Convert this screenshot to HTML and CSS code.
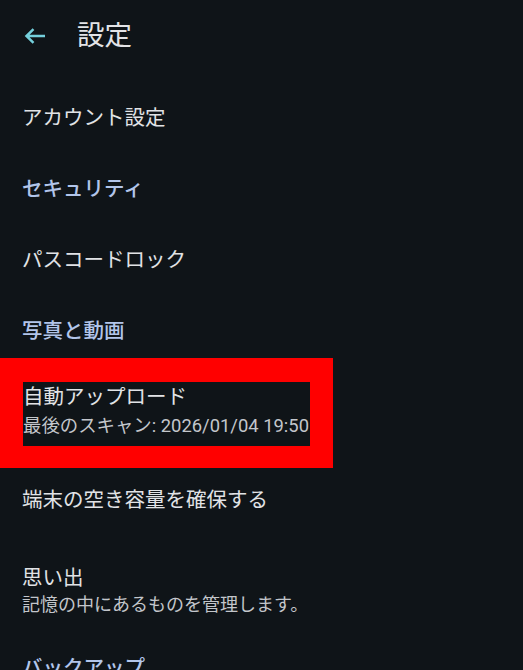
FILE: index.html
```html
<!DOCTYPE html>
<html lang="ja">
<head>
    <meta charset="UTF-8">
    <meta name="viewport" content="width=device-width, initial-scale=1.0">
    <title>設定</title>
    <link rel="stylesheet" href="styles.css">
</head>
<body>
    <div class="toolbar">
        <svg class="back" width="22" height="16" viewBox="0 0 22 16">
            <path d="M21 8H2.5M9.5 1.2L2.5 8l7 6.8" fill="none" stroke="#74cfdb" stroke-width="2.5"/>
        </svg>
        <h1>設定</h1>
    </div>

    <div class="row item"><p class="title">アカウント設定</p></div>
    <div class="row category"><p class="cat">セキュリティ</p></div>
    <div class="row item"><p class="title">パスコードロック</p></div>
    <div class="row category"><p class="cat">写真と動画</p></div>

    <div class="upload">
        <div class="marked">
            <p class="title">自動アップロード</p>
            <p class="summary">最後のスキャン: 2026/01/04 19:50</p>
        </div>
    </div>

    <div class="row item short"><p class="title">端末の空き容量を確保する</p></div>
    <div class="row item tall">
        <p class="title">思い出</p>
        <p class="summary">記憶の中にあるものを管理します。</p>
    </div>
    <div class="row category last"><p class="cat">バックアップ</p></div>
</body>
</html>
```

FILE: styles.css
```css
* { margin: 0; padding: 0; box-sizing: border-box; }
html, body { background: #0f1418; }
body { font-family: Roboto, "Noto Sans CJK JP", sans-serif; color: #e1e3e6; width: 523px; height: 670px; overflow: hidden; }
.toolbar { height: 72px; display: flex; align-items: center; padding-left: 24px; }
.back { display: block; margin-right: 31px; }
h1 { font-size: 27.5px; font-weight: 400; line-height: 40px; color: #e3e4e7; }
.row { display: flex; flex-direction: column; justify-content: center; padding: 0 22px; }
.item { height: 91px; }
.item.short { height: 72px; }
.item.tall { height: 110px; }
.category { height: 51.5px; }
.category.last { height: 43px; }
.title { font-size: 20.5px; line-height: 28px; }
.cat { font-size: 20.5px; line-height: 28px; font-weight: 500; color: #b2c5ea; }
.summary { font-size: 18px; line-height: 26px; color: #c3c6cb; }
.upload { height: 107px; padding-top: 1px; }
.marked { width: 333px; height: 110px; border: 23px solid #ff0000; border-top-width: 24px; border-bottom-width: 22px; background: #0f1418; padding-bottom: 6px; }
.marked .title { line-height: 30px; }
.marked .summary { font-size: 18.4px; line-height: 28px; }
```
